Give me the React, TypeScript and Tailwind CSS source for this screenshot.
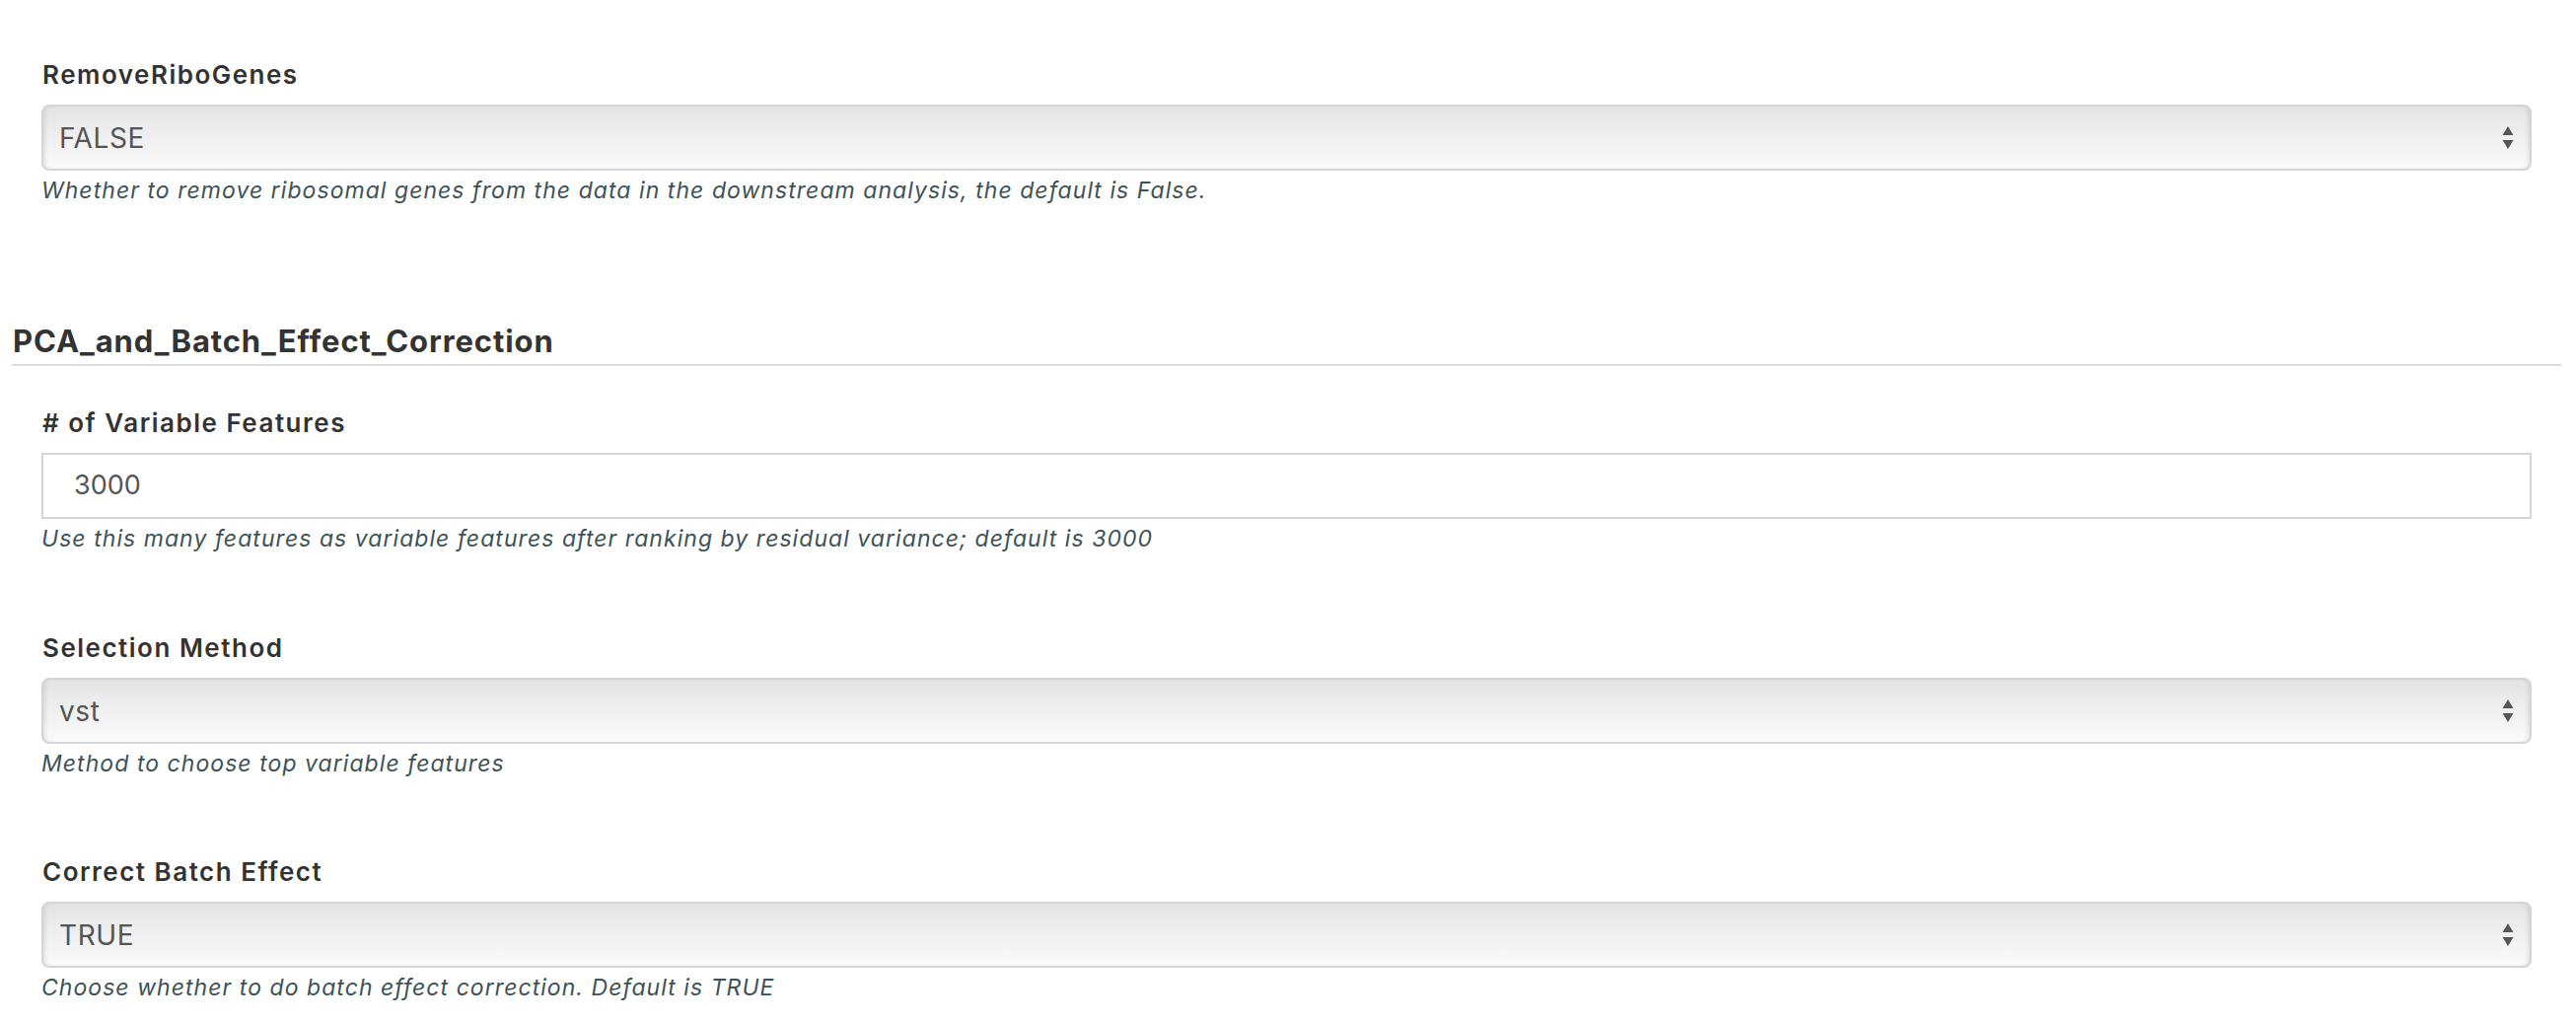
import React from "react";

const font = { fontFamily: "Inter, 'Noto Sans', sans-serif" };

const Arrows = () => (
  <svg width="12" height="24" viewBox="0 0 12 24" className="absolute right-[16px] top-1/2 -translate-y-1/2">
    <path d="M6 0 L11.5 9 L0.5 9 Z" fill="#555" />
    <path d="M0.5 14 L11.5 14 L6 23 Z" fill="#555" />
  </svg>
);

const SelectBox = ({ value }: { value: string }) => (
  <div className="relative h-[67px] rounded-[8px] border-2 border-[#d3d5da] bg-gradient-to-b from-[#e4e4e4] to-[#fbfbfb] shadow-[inset_4px_0_5px_-3px_rgba(0,0,0,0.12),inset_-4px_0_5px_-3px_rgba(0,0,0,0.12)] flex items-center pl-[16px] text-[28px] tracking-[0.6px] text-[#555]">
    {value}
    <Arrows />
  </div>
);

const TextBox = ({ value }: { value: string }) => (
  <div className="h-[67px] border-2 border-[#d3d5da] bg-white flex items-center pl-[31px] text-[27px] text-[#555]">
    {value}
  </div>
);

const Field = ({
  label,
  help,
  children,
  className = "",
}: {
  label: string;
  help: string;
  children: React.ReactNode;
  className?: string;
}) => (
  <div className={"mx-[30px] " + className}>
    <div className="text-[26px] leading-[30px] font-semibold tracking-[1.5px] text-[#333] pl-[1px]">{label}</div>
    <div className="mt-[15px]">{children}</div>
    <div className="mt-[7px] text-[23px] leading-[26px] italic tracking-[1.05px] text-[#3d5257]">{help}</div>
  </div>
);

const App = () => {
  return (
    <div className="w-[2612px] h-[1038px] bg-white overflow-hidden pl-[12px] pr-[15px] pt-[61px]" style={font}>
      <Field
        label="RemoveRiboGenes"
        help="Whether to remove ribosomal genes from the data in the downstream analysis, the default is False."
      >
        <SelectBox value="FALSE" />
      </Field>

      <div className="mt-[122px] border-b-2 border-[#dcdcdc] pb-[5px] pl-[1px] text-[31px] leading-[36px] font-bold tracking-[0.9px] text-[#333]">
        PCA_and_Batch_Effect_Correction
      </div>

      <Field
        className="mt-[43px]"
        label="# of Variable Features"
        help="Use this many features as variable features after ranking by residual variance; default is 3000"
      >
        <TextBox value="3000" />
      </Field>

      <Field className="mt-[83px]" label="Selection Method" help="Method to choose top variable features">
        <SelectBox value="vst" />
      </Field>

      <Field
        className="mt-[82px]"
        label="Correct Batch Effect"
        help="Choose whether to do batch effect correction. Default is TRUE"
      >
        <SelectBox value="TRUE" />
      </Field>
    </div>
  );
};

export default App;
